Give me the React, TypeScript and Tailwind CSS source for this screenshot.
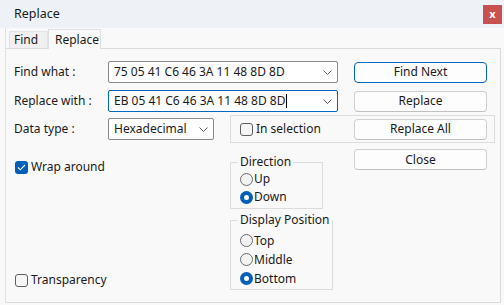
import React from 'react'

const font = "font-['Segoe_UI','Noto_Sans',sans-serif]"

function Chevron() {
  return (
    <svg width="9" height="5" viewBox="0 0 9 5" className="shrink-0">
      <path d="M0.5 0.5 L4.5 4.5 L8.5 0.5" fill="none" stroke="#5d5d5d" strokeWidth="1" />
    </svg>
  )
}

function Combo({ value, width, focused, caret }: { value: string; width: string; focused?: boolean; caret?: boolean }) {
  return (
    <div
      className={`${width} h-[22px] flex items-center justify-between bg-white pl-[5px] pr-[5px] rounded-[2px] border ${
        focused ? 'border-[#0067c0]' : 'border-[#8a8a8a]'
      }`}
    >
      <span className="flex items-center leading-none whitespace-nowrap">
        {value}
        {caret && <span className="inline-block w-px h-[14px] bg-black ml-px" />}
      </span>
      <Chevron />
    </div>
  )
}

function Button({ label, primary }: { label: string; primary?: boolean }) {
  return (
    <div
      className={`w-[133px] h-[21px] flex items-center justify-center rounded-[4px] bg-[#fdfdfd] border ${
        primary ? 'border-[#0067c0]' : 'border-[#d0d0d0] border-b-[#c0c0c0]'
      }`}
    >
      {label}
    </div>
  )
}

function Checkbox({ label, checked }: { label: string; checked?: boolean }) {
  return (
    <div className="flex items-center h-[14px]">
      {checked ? (
        <div className="w-[13px] h-[13px] rounded-[3px] bg-[#005fb8] flex items-center justify-center">
          <svg width="9" height="7" viewBox="0 0 9 7">
            <path d="M1 3.5 L3.3 5.8 L8 1" fill="none" stroke="white" strokeWidth="1.1" />
          </svg>
        </div>
      ) : (
        <div className="w-[13px] h-[13px] rounded-[3px] border border-[#5f5f5f] bg-[#f6f6f6]" />
      )}
      <span className="ml-[3px] whitespace-nowrap">{label}</span>
    </div>
  )
}

function Radio({ label, checked, h }: { label: string; checked?: boolean; h: string }) {
  return (
    <div className={`flex items-center ${h}`}>
      {checked ? (
        <div className="w-[13px] h-[13px] rounded-full bg-[#005fb8] flex items-center justify-center">
          <div className="w-[5px] h-[5px] rounded-full bg-white" />
        </div>
      ) : (
        <div className="w-[13px] h-[13px] rounded-full border border-[#6b6b6b] bg-[#f3f3f3]" />
      )}
      <span className="ml-px whitespace-nowrap">{label}</span>
    </div>
  )
}

export default function App() {
  return (
    <div className={`w-[504px] h-[305px] bg-[#f9f9f9] text-[12px] text-[#1a1a1a] overflow-hidden ${font}`}>
      {/* Title bar */}
      <div className="h-[28px] bg-[#eef2f7] flex items-start justify-between">
        <span className="pl-[14px] pt-[5px] text-[12.5px]">Replace</span>
        <div className="mt-[5px] mr-[2px] w-[19px] h-[19px] bg-[#c75050] text-white text-[11px] font-bold flex items-center justify-center leading-none pb-[2px]">
          x
        </div>
      </div>

      {/* Tab control */}
      <div className="ml-[5px] w-[496px] border-l border-[#e0e0e0]">
        <div className="h-[20px] flex items-end pl-[3px]">
          <div className="w-[39px] h-[17px] bg-[#f0f0f0] border border-b-0 border-[#e3e3e3] pl-[4px] flex items-center">
            Find
          </div>
          <div className="w-[53px] h-[20px] bg-[#f9f9f9] border border-b-0 border-[#e0e0e0] pl-[6px] flex items-start pt-px relative top-px">
            Replace
          </div>
        </div>

        <div className="h-[255px] border-t border-r border-b border-[#dadada] pl-[8px] pt-[12px]">
          {/* Find what */}
          <div className="flex items-center h-[22px]">
            <span className="w-[94px]">Find what :</span>
            <Combo value="75 05 41 C6 46 3A 11 48 8D 8D" width="w-[230px]" />
            <div className="ml-[16px]">
              <Button label="Find Next" primary />
            </div>
          </div>

          {/* Replace with */}
          <div className="flex items-center h-[22px] mt-[7px]">
            <span className="w-[94px]">Replace with :</span>
            <Combo value="EB 05 41 C6 46 3A 11 48 8D 8D" width="w-[230px]" focused caret />
            <div className="ml-[16px]">
              <Button label="Replace" />
            </div>
          </div>

          {/* Data type */}
          <div className="flex items-center h-[28px] mt-[3px]">
            <span className="w-[94px]">Data type :</span>
            <Combo value="Hexadecimal" width="w-[106px]" />
            <div className="ml-[16px] w-[265px] h-[28px] border border-[#dcdcdc] flex items-center pl-[9px] pr-[7px]">
              <Checkbox label="In selection" />
              <div className="ml-auto">
                <Button label="Replace All" />
              </div>
            </div>
          </div>

          {/* Lower section */}
          <div className="flex mt-[6px]">
            <div className="w-[216px] pl-px">
              <div className="mt-[11px]">
                <Checkbox label="Wrap around" checked />
              </div>
              <div className="mt-[99px]">
                <Checkbox label="Transparency" />
              </div>
            </div>

            <div className="w-[93px] shrink-0">
              <fieldset className="mt-[5px] border border-[#dcdcdc] pl-[9px] pb-[2px]">
                <legend className="ml-[-2px] px-[2px] leading-[16px] whitespace-nowrap">Direction</legend>
                <Radio label="Up" h="h-[18px]" />
                <Radio label="Down" checked h="h-[18px]" />
              </fieldset>
              <fieldset className="mt-[3px] border border-[#dcdcdc] pl-[9px] pt-[3px] pb-px">
                <legend className="ml-[-2px] px-[2px] leading-[16px] whitespace-nowrap">Display Position</legend>
                <Radio label="Top" h="h-[19px]" />
                <Radio label="Middle" h="h-[19px]" />
                <Radio label="Bottom" checked h="h-[19px]" />
              </fieldset>
            </div>

            <div className="ml-[31px]">
              <Button label="Close" />
            </div>
          </div>
        </div>
      </div>
    </div>
  )
}
